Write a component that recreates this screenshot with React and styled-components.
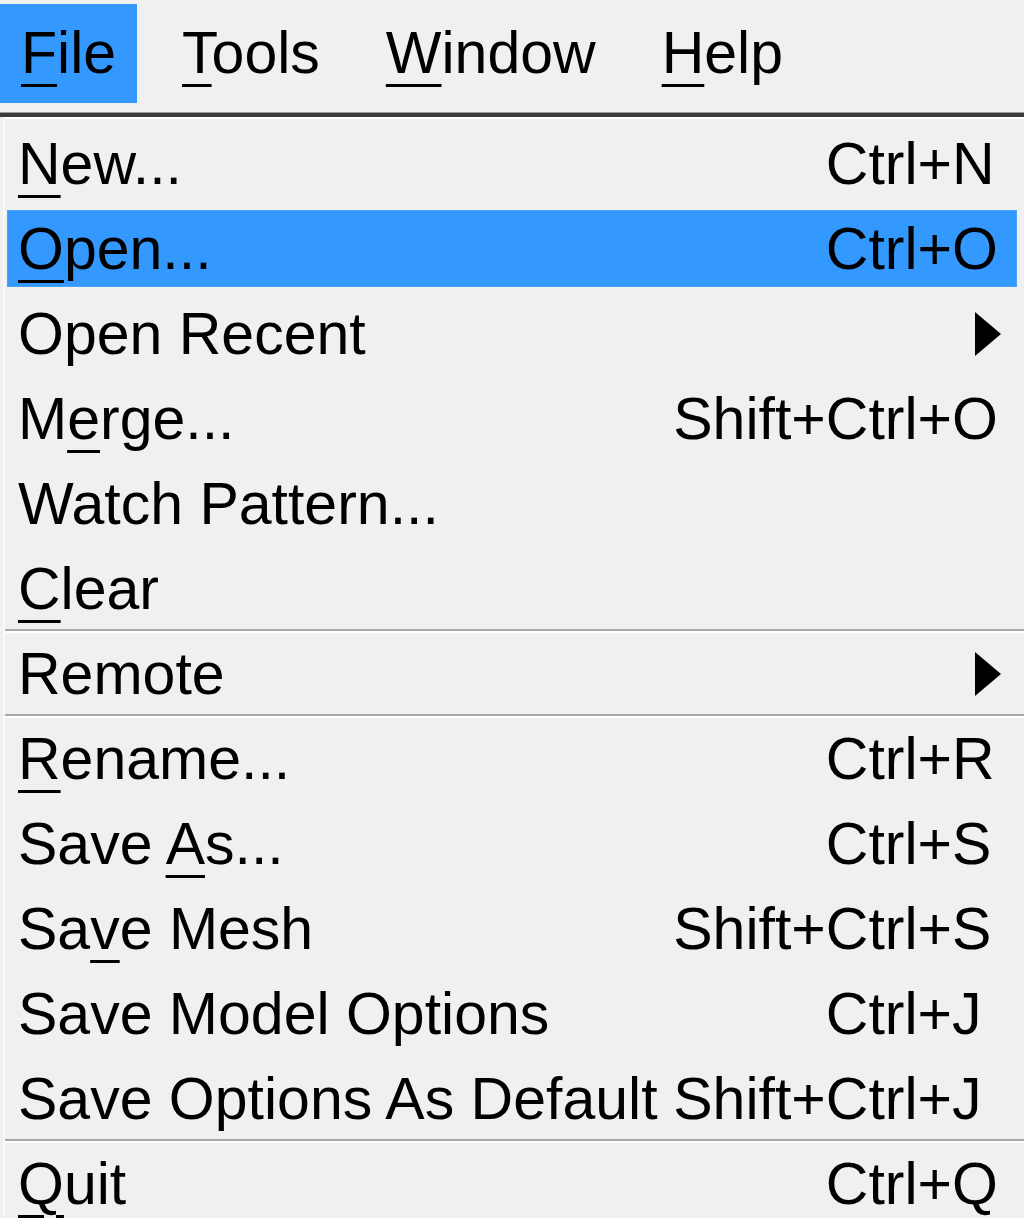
import React from "react";
import styled, { createGlobalStyle, css } from "styled-components";

const GlobalStyle = createGlobalStyle`
  html, body {
    margin: 0;
    padding: 0;
    background: #f0f0f0;
  }
  body {
    font-family: "Liberation Sans", Arial, sans-serif;
    font-size: 59px;
    color: #000;
  }
`;

const MenuBar = styled.div`
  display: flex;
  align-items: stretch;
  gap: 24px;
  padding: 4px 0 10px;
  border-bottom: 4px solid #3a3a3a;
  box-shadow: 0 -1px 0 #9a9a9a inset;
`;

const BarItem = styled.div`
  height: 99px;
  line-height: 99px;
  padding: 0 21px;
  ${(props) =>
    props.active &&
    css`
      background: #3399ff;
    `}
`;

const Mnemonic = styled.span`
  text-decoration: underline;
  text-decoration-thickness: 3px;
  text-underline-offset: 11px;
`;

const Menu = styled.div`
  margin-left: 3px;
  border-left: 2px solid #f8f8f8;
  border-top: 2px solid #ffffff;
  padding: 2px 8px 0 3px;
`;

const Row = styled.div`
  height: 85px;
  padding: 5px 0;
  box-sizing: border-box;
`;

const RowBody = styled.div`
  height: 75px;
  display: grid;
  grid-template-columns: 1fr auto 64px;
  align-items: center;
  white-space: nowrap;
  ${(props) =>
    props.active &&
    css`
      background: #3399ff;
      box-shadow: 0 0 0 1px #4aa4ff;
    `}
`;

const Label = styled.span`
  padding-left: 10px;
`;

const Mods = styled.span`
  text-align: right;
`;

const Key = styled.span`
  display: flex;
  align-items: center;
`;

const Arrow = styled.svg`
  margin-left: 23px;
  width: 26px;
  height: 44px;
`;

const Separator = styled.div`
  height: 4px;
  margin: -2px -8px -2px -3px;
  box-sizing: border-box;
  border-top: 2px solid #a8a8a8;
  border-bottom: 2px solid #ffffff;
  position: relative;
`;

// label with one underlined mnemonic letter
const Text = ({ text, m }) => {
  if (m == null) return text;
  return (
    <>
      {text.slice(0, m)}
      <Mnemonic>{text[m]}</Mnemonic>
      {text.slice(m + 1)}
    </>
  );
};

const items = [
  { label: "New...", m: 0, mods: "Ctrl+", key: "N" },
  { label: "Open...", m: 0, mods: "Ctrl+", key: "O", active: true },
  { label: "Open Recent", sub: true },
  { label: "Merge...", m: 1, mods: "Shift+Ctrl+", key: "O" },
  { label: "Watch Pattern..." },
  { label: "Clear", m: 0, sep: true },
  { label: "Remote", sub: true, sep: true },
  { label: "Rename...", m: 0, mods: "Ctrl+", key: "R" },
  { label: "Save As...", m: 5, mods: "Ctrl+", key: "S" },
  { label: "Save Mesh", m: 2, mods: "Shift+Ctrl+", key: "S" },
  { label: "Save Model Options", mods: "Ctrl+", key: "J" },
  { label: "Save Options As Default", mods: "Shift+Ctrl+", key: "J", sep: true },
  { label: "Quit", m: 0, mods: "Ctrl+", key: "Q" },
];

const App = () => {
  return (
    <>
      <GlobalStyle />
      <MenuBar>
        <BarItem active>
          <Text text="File" m={0} />
        </BarItem>
        <BarItem>
          <Text text="Tools" m={0} />
        </BarItem>
        <BarItem>
          <Text text="Window" m={0} />
        </BarItem>
        <BarItem>
          <Text text="Help" m={0} />
        </BarItem>
      </MenuBar>
      <Menu>
        {items.map((item) => (
          <React.Fragment key={item.label}>
            <Row>
              <RowBody active={item.active}>
                <Label>
                  <Text text={item.label} m={item.m} />
                </Label>
                <Mods>{item.mods}</Mods>
                <Key>
                  {item.key}
                  {item.sub && (
                    <Arrow viewBox="0 0 26 44">
                      <polygon points="0,0 26,22 0,44" fill="#000" />
                    </Arrow>
                  )}
                </Key>
              </RowBody>
            </Row>
            {item.sep && <Separator />}
          </React.Fragment>
        ))}
      </Menu>
    </>
  );
};

export default App;
